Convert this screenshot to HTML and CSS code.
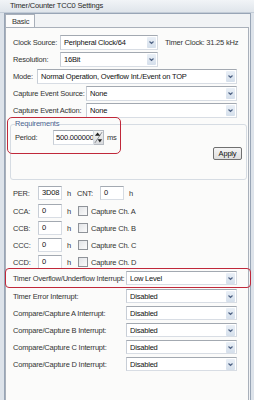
FILE: index.html
```html
<!DOCTYPE html>
<html>
<head>
  <meta charset="UTF-8" />
  <title>Timer/Counter TCC0 Settings</title>
  <link rel="stylesheet" href="styles.css">
</head>
<body>
  <div class="titlebar">Timer/Counter TCC0 Settings</div>

  <div class="frame">
    <div class="tabs">
      <div class="tab">Basic</div>
    </div>

    <div class="page">
      <!-- Основные настройки -->
      <div class="rows">
        <div class="row">
          <div class="label w-clock">Clock Source:</div>
          <div class="select s-clock"><span>Peripheral Clock/64</span><i class="drop"><svg viewBox="0 0 9 11"><polyline points="2.5,4.5 4.5,6.5 6.5,4.5"/></svg></i></div>
          <div class="note">Timer Clock: 31.25 kHz</div>
        </div>
        <div class="row">
          <div class="label w-clock">Resolution:</div>
          <div class="select s-clock"><span>16Bit</span><i class="drop"><svg viewBox="0 0 9 11"><polyline points="2.5,4.5 4.5,6.5 6.5,4.5"/></svg></i></div>
        </div>
        <div class="row">
          <div class="label w-mode">Mode:</div>
          <div class="select s-mode"><span>Normal Operation, Overflow Int./Event on TOP</span><i class="drop"><svg viewBox="0 0 9 11"><polyline points="2.5,4.5 4.5,6.5 6.5,4.5"/></svg></i></div>
        </div>
        <div class="row">
          <div class="label w-capture">Capture Event Source:</div>
          <div class="select s-capture"><span>None</span><i class="drop"><svg viewBox="0 0 9 11"><polyline points="2.5,4.5 4.5,6.5 6.5,4.5"/></svg></i></div>
        </div>
        <div class="row">
          <div class="label w-capture">Capture Event Action:</div>
          <div class="select s-capture"><span>None</span><i class="drop"><svg viewBox="0 0 9 11"><polyline points="2.5,4.5 4.5,6.5 6.5,4.5"/></svg></i></div>
        </div>
      </div>

      <!-- Требования -->
      <fieldset class="group">
        <legend>Requirements</legend>
        <div class="row">
          <div class="label w-period">Period:</div>
          <div class="field f-period">500.000000</div>
          <div class="spin">
            <svg viewBox="0 0 10 14">
              <line x1="9" y1="1" x2="1" y2="13" />
              <polygon points="1,5 4,1.5 7,5" class="up" />
              <polygon points="4,9 9,9 6.5,12.5" class="dn" />
            </svg>
          </div>
          <div class="unit">ms</div>
        </div>
        <div class="apply-row">
          <button class="btn">Apply</button>
        </div>
      </fieldset>

      <!-- Регистры -->
      <div class="regs">
        <div class="row">
          <div class="label w-reg">PER:</div>
          <div class="field f-reg">3D08</div>
          <div class="hex">h</div>
          <div class="label w-cnt">CNT:</div>
          <div class="field f-reg">0</div>
          <div class="hex">h</div>
        </div>
        <div class="row">
          <div class="label w-reg">CCA:</div>
          <div class="field f-reg">0</div>
          <div class="hex">h</div>
          <div class="check"></div>
          <div class="check-text">Capture Ch. A</div>
        </div>
        <div class="row">
          <div class="label w-reg">CCB:</div>
          <div class="field f-reg">0</div>
          <div class="hex">h</div>
          <div class="check"></div>
          <div class="check-text">Capture Ch. B</div>
        </div>
        <div class="row">
          <div class="label w-reg">CCC:</div>
          <div class="field f-reg">0</div>
          <div class="hex">h</div>
          <div class="check"></div>
          <div class="check-text">Capture Ch. C</div>
        </div>
        <div class="row">
          <div class="label w-reg">CCD:</div>
          <div class="field f-reg">0</div>
          <div class="hex">h</div>
          <div class="check"></div>
          <div class="check-text">Capture Ch. D</div>
        </div>
      </div>

      <!-- Прерывания -->
      <div class="irqs">
        <div class="row first">
          <div class="label w-irq">Timer Overflow/Underflow Interrupt:</div>
          <div class="select s-irq"><span>Low Level</span><i class="drop"><svg viewBox="0 0 9 11"><polyline points="2.5,4.5 4.5,6.5 6.5,4.5"/></svg></i></div>
        </div>
        <div class="row">
          <div class="label w-irq">Timer Error Interrupt:</div>
          <div class="select s-irq"><span>Disabled</span><i class="drop"><svg viewBox="0 0 9 11"><polyline points="2.5,4.5 4.5,6.5 6.5,4.5"/></svg></i></div>
        </div>
        <div class="row">
          <div class="label w-irq">Compare/Capture A Interrupt:</div>
          <div class="select s-irq"><span>Disabled</span><i class="drop"><svg viewBox="0 0 9 11"><polyline points="2.5,4.5 4.5,6.5 6.5,4.5"/></svg></i></div>
        </div>
        <div class="row">
          <div class="label w-irq">Compare/Capture B Interrupt:</div>
          <div class="select s-irq"><span>Disabled</span><i class="drop"><svg viewBox="0 0 9 11"><polyline points="2.5,4.5 4.5,6.5 6.5,4.5"/></svg></i></div>
        </div>
        <div class="row">
          <div class="label w-irq">Compare/Capture C Interrupt:</div>
          <div class="select s-irq"><span>Disabled</span><i class="drop"><svg viewBox="0 0 9 11"><polyline points="2.5,4.5 4.5,6.5 6.5,4.5"/></svg></i></div>
        </div>
        <div class="row">
          <div class="label w-irq">Compare/Capture D Interrupt:</div>
          <div class="select s-irq"><span>Disabled</span><i class="drop"><svg viewBox="0 0 9 11"><polyline points="2.5,4.5 4.5,6.5 6.5,4.5"/></svg></i></div>
        </div>
      </div>

      <!-- Выделения -->
      <div class="mark mark-period"></div>
      <div class="mark mark-irq"></div>
    </div>
  </div>
</body>
</html>
```

FILE: styles.css
```css
:root {
  --text-color: #333;
  --frame-border: #98a5b6;
  --page-border: #a9b0ba;
  --input-border: #a5acb5;
  --mark-color: #c0283a;
}

body {
  margin: 0;
  background: #dde3ea;
  font-family: "Liberation Sans", Arial, sans-serif;
  font-size: 7.5px;
  letter-spacing: -0.2px;
  color: var(--text-color);
  height: 400px;
  overflow: hidden;
}

.titlebar {
  height: 12px;
  line-height: 12px;
  padding-left: 10px;
  background: linear-gradient(#f1f4f7, #dfe5eb);
  border-bottom: 1px solid #c3ccd7;
  color: #2a2a2a;
}

.frame {
  margin: 0 3px 0 4px;
  border: 1px solid var(--frame-border);
  border-bottom-color: #b9c2cd;
  background: #f1f3f5;
}

.tabs {
  height: 13px;
  display: flex;
}

.tab {
  width: 30px;
  height: 13px;
  line-height: 13px;
  padding-left: 6px;
  box-sizing: border-box;
  border: 1px solid var(--page-border);
  border-bottom: none;
  background: #fcfcfc;
  margin-bottom: -1px;
  position: relative;
  z-index: 1;
}

.page {
  position: relative;
  height: 368px;
  margin-right: 1px;
  border: 1px solid var(--page-border);
  background: #fbfbfa;
  padding: 7px 1px 0 7px;
  box-sizing: content-box;
}

.rows {
  display: flex;
  flex-direction: column;
  gap: 2px;
}

.row {
  display: flex;
  align-items: center;
  height: 15px;
  white-space: nowrap;
}

.label {
  flex: none;
}

.w-clock { width: 47px; }
.w-mode { width: 24px; }
.w-capture { width: 73px; }
.w-period { width: 38px; }
.w-reg { width: 25px; }
.w-cnt { width: 23px; }
.w-irq { width: 113px; }

.select {
  display: flex;
  align-items: center;
  height: 15px;
  box-sizing: border-box;
  border: 1px solid var(--input-border);
  border-color: #a3a9b1 #d6dbe2 #d8dde4 #c8ced6;
  background: #fff;
  color: #111;
  padding-left: 3px;
}

.select span {
  flex: 1;
  overflow: hidden;
}

.s-clock { width: 98px; }
.s-mode { width: 200px; }
.s-capture { width: 151px; }
.s-irq { width: 111px; }

.drop {
  width: 9px;
  height: 11px;
  margin-right: 1px;
  background: linear-gradient(#eaf0f7, #d5dfeb);
  border-radius: 1px;
}

.drop svg {
  display: block;
  width: 9px;
  height: 11px;
}

.drop polyline {
  fill: none;
  stroke: #4e6284;
  stroke-width: 1.2;
}

.note {
  margin-left: 7px;
}

/* Группа Requirements */
.group {
  margin: 2px 0 0 -3px;
  padding: 2px 4px 19px 4px;
  border: 1px solid #d6dce3;
  border-radius: 3px;
}

.group legend {
  padding: 0;
  line-height: 8px;
  color: #4b6590;
}

.field {
  height: 14px;
  line-height: 12px;
  box-sizing: border-box;
  border: 1px solid #a3a9b1;
  border-color: #a3a9b1 #d6dbe2 #d8dde4 #c8ced6;
  background: #fff;
  color: #111;
  padding-left: 3px;
  overflow: hidden;
}

.f-period {
  width: 41px;
  height: 15px;
  line-height: 13px;
  padding-left: 2px;
}

.spin {
  width: 10px;
  height: 15px;
  box-sizing: border-box;
  border: 1px solid #b5bac1;
  border-left: none;
  background: linear-gradient(#f3f3f3, #d9dbde);
}

.spin svg {
  display: block;
  width: 9px;
  height: 13px;
}

.spin line {
  stroke: #6b6f75;
  stroke-width: 0.8;
}

.spin .up,
.spin .dn {
  fill: #1f1f1f;
}

.unit {
  margin-left: 3px;
}

.apply-row {
  display: flex;
  justify-content: flex-end;
  margin-top: 2px;
}

.btn {
  width: 29px;
  height: 13px;
  padding: 0;
  font: inherit;
  letter-spacing: inherit;
  color: #111;
  line-height: 11px;
  border: 1px solid #707070;
  border-radius: 2px;
  background: linear-gradient(#f5f5f5, #dedede);
}

/* Регистры */
.regs {
  margin-top: 6px;
  display: flex;
  flex-direction: column;
  gap: 3px;
}

.regs .row {
  height: 14px;
}

.regs .row:nth-child(2) {
  margin-top: 1px;
}

.f-reg {
  width: 24px;
}

.hex {
  width: 10px;
  padding-left: 5px;
  box-sizing: content-box;
  flex: none;
}

.check {
  width: 10px;
  height: 10px;
  margin-left: 1px;
  box-sizing: border-box;
  border: 1px solid #8f9399;
  background: linear-gradient(135deg, #e2e4e7, #fbfbfb);
}

.check-text {
  margin-left: 3px;
}

/* Прерывания */
.irqs {
  display: flex;
  flex-direction: column;
  gap: 3px;
}

.irqs .row {
  height: 14px;
}

.irqs .select {
  height: 14px;
}

.irqs .row.first {
  margin-top: 2px;
  margin-bottom: 1px;
}

/* Красные рамки поверх формы */
.mark {
  position: absolute;
  border: 1.5px solid var(--mark-color);
  border-radius: 5px;
  box-sizing: border-box;
}

.mark-period {
  left: 1px;
  top: 89px;
  width: 114px;
  height: 37px;
}

.mark-irq {
  left: -1px;
  top: 240px;
  width: 246px;
  height: 20px;
  border-radius: 4px;
}
```
